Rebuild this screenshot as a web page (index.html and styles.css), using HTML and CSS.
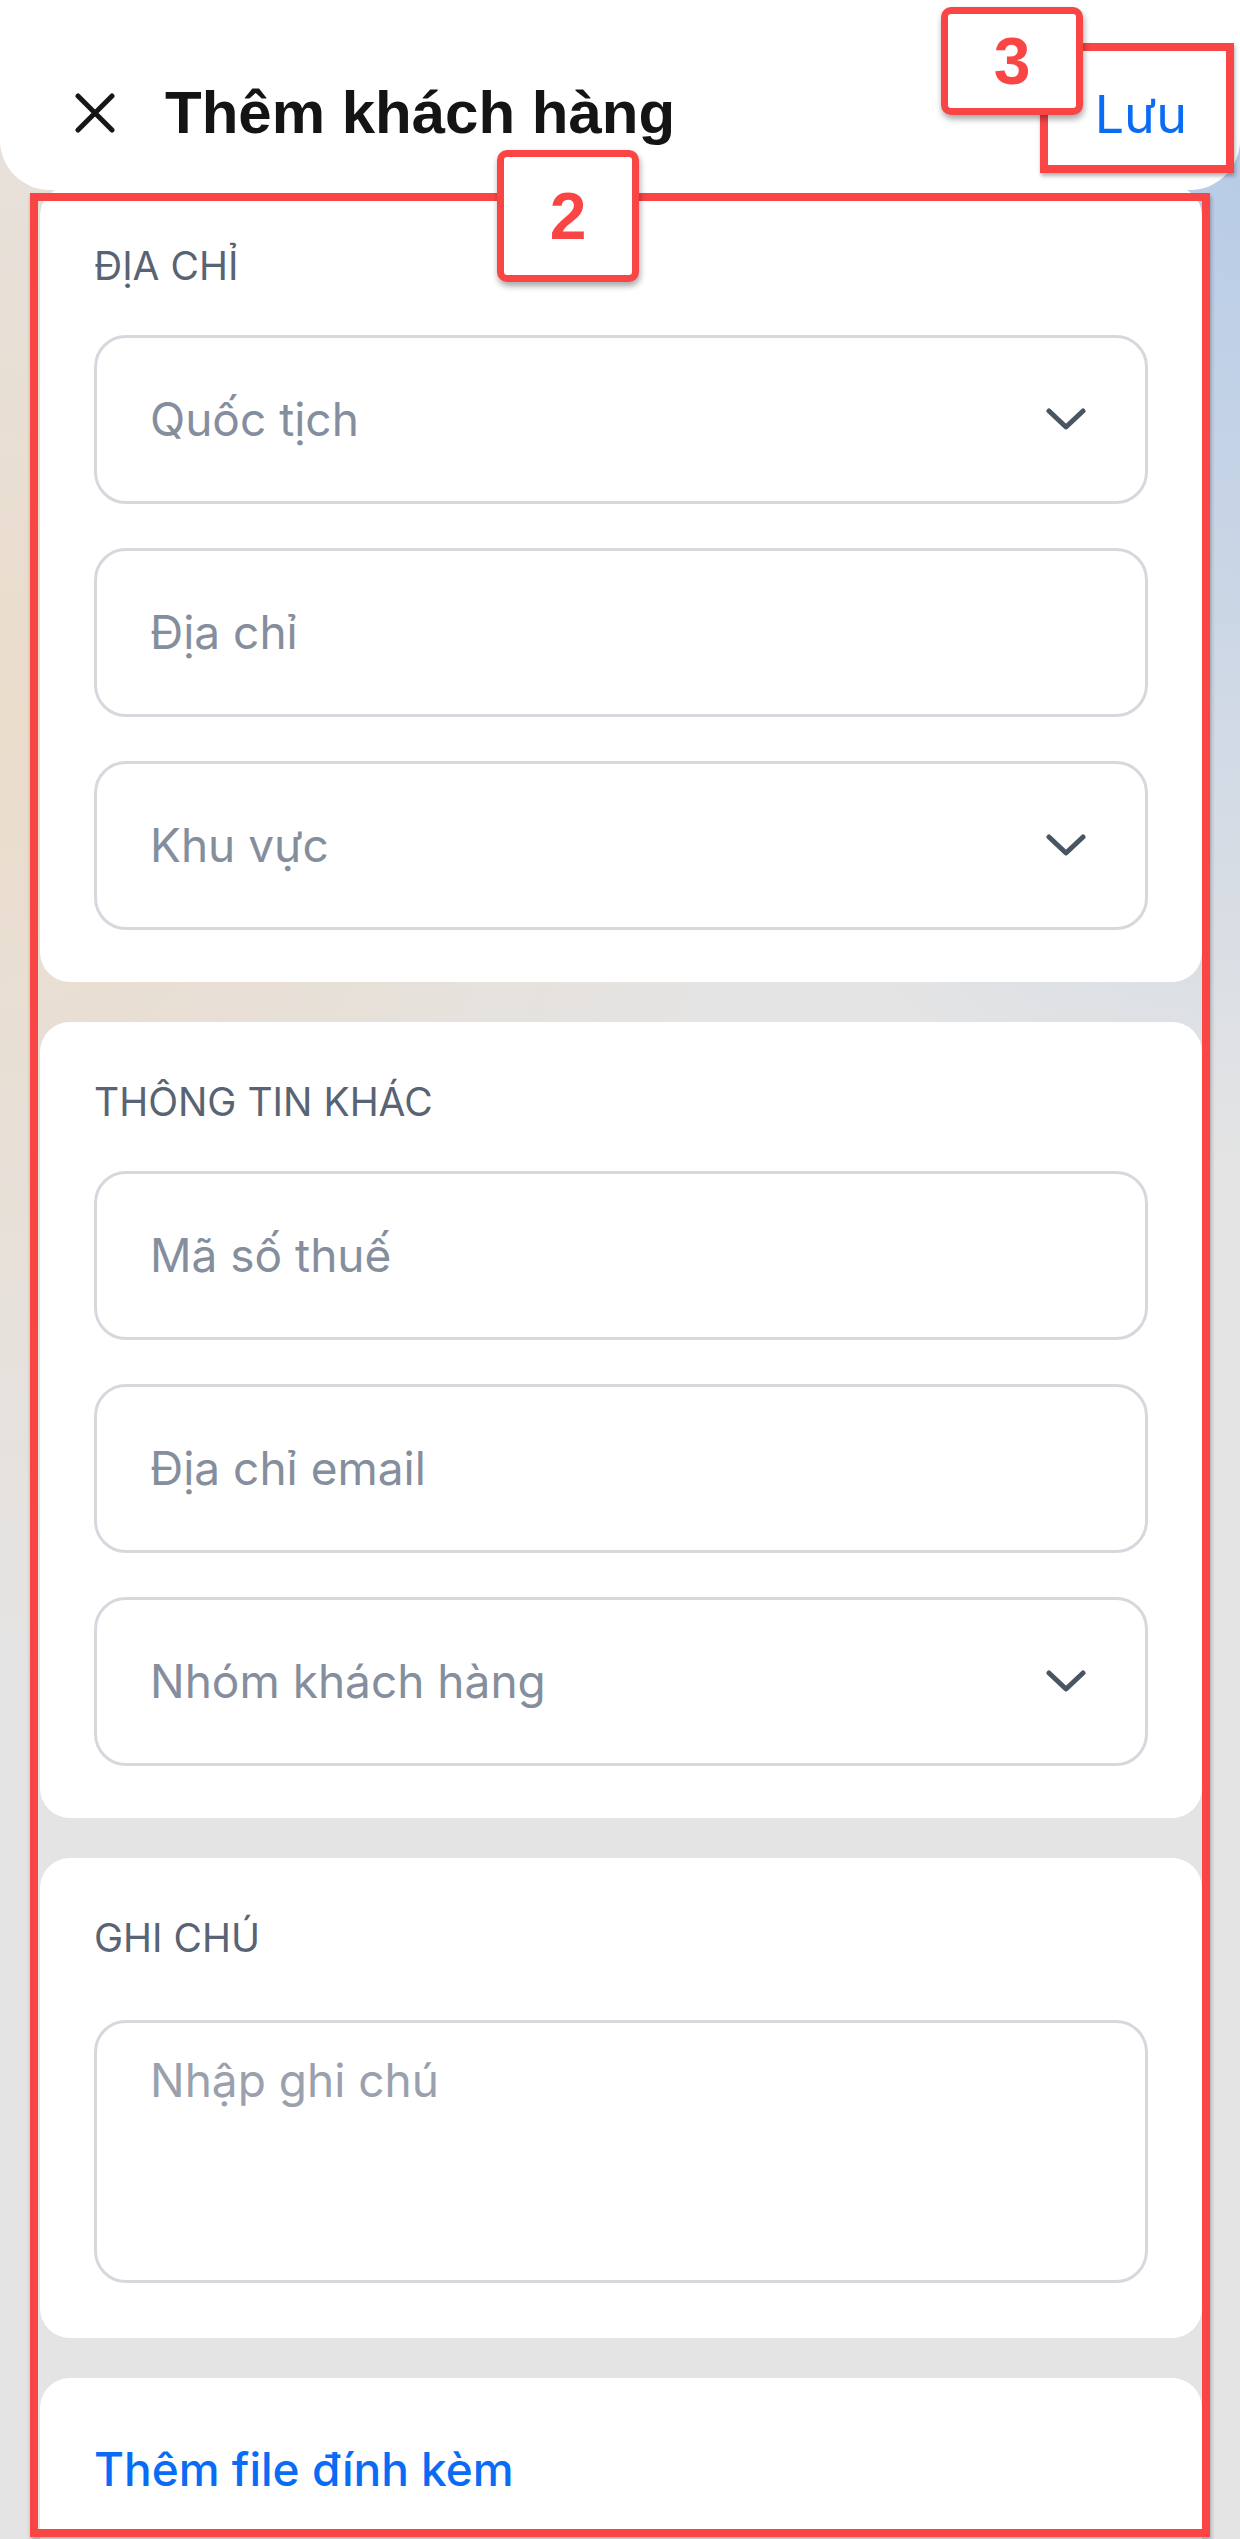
FILE: index.html
```html
<!DOCTYPE html>
<html lang="vi">
<head>
<meta charset="utf-8">
<title>Thêm khách hàng</title>
<link rel="stylesheet" href="styles.css">
</head>
<body>
  <header class="header">
    <svg class="close" width="40" height="40" viewBox="0 0 40 40" aria-hidden="true">
      <path d="M3 3 L37 37 M37 3 L3 37" stroke="#161616" stroke-width="5" stroke-linecap="round" fill="none"/>
    </svg>
    <h1 class="title">Thêm khách hàng</h1>
    <span class="save">Lưu</span>
  </header>

  <main class="content">
    <section class="card">
      <div class="label">ĐỊA CHỈ</div>
      <div class="fields">
        <div class="field"><span class="ph">Quốc tịch</span>
          <svg class="chev" width="40" height="24" viewBox="0 0 40 24"><path d="M3 3 L20 19 L37 3" stroke="#4a5563" stroke-width="5" stroke-linecap="round" stroke-linejoin="round" fill="none"/></svg>
        </div>
        <div class="field"><span class="ph">Địa chỉ</span></div>
        <div class="field"><span class="ph">Khu vực</span>
          <svg class="chev" width="40" height="24" viewBox="0 0 40 24"><path d="M3 3 L20 19 L37 3" stroke="#4a5563" stroke-width="5" stroke-linecap="round" stroke-linejoin="round" fill="none"/></svg>
        </div>
      </div>
    </section>

    <section class="card">
      <div class="label">THÔNG TIN KHÁC</div>
      <div class="fields">
        <div class="field"><span class="ph">Mã số thuế</span></div>
        <div class="field"><span class="ph">Địa chỉ email</span></div>
        <div class="field"><span class="ph">Nhóm khách hàng</span>
          <svg class="chev" width="40" height="24" viewBox="0 0 40 24"><path d="M3 3 L20 19 L37 3" stroke="#4a5563" stroke-width="5" stroke-linecap="round" stroke-linejoin="round" fill="none"/></svg>
        </div>
      </div>
    </section>

    <section class="card card-note">
      <div class="label">GHI CHÚ</div>
      <div class="textarea"><span class="ph ph-light">Nhập ghi chú</span></div>
    </section>

    <section class="card card-attach">
      <span class="attach">Thêm file đính kèm</span>
    </section>
  </main>

  <div class="anno-rect anno-main"></div>
  <div class="anno-rect anno-save"></div>
  <div class="anno-box anno-2">2</div>
  <div class="anno-box anno-3">3</div>
</body>
</html>
```

FILE: styles.css
```css
html, body {
  margin: 0;
  padding: 0;
}

body {
  position: relative;
  width: 1240px;
  height: 2539px;
  overflow: hidden;
  font-family: Inter, "Noto Sans", "Liberation Sans", sans-serif;
  background:
    radial-gradient(ellipse 760px 950px at 0px 720px, #eadccb 0%, rgba(234, 220, 203, 0) 100%),
    radial-gradient(ellipse 640px 1050px at 1240px 120px, #b6cbe7 0%, rgba(182, 203, 231, 0) 100%),
    #e4e4e4;
}

/* Header */
.header {
  position: relative;
  z-index: 2;
  box-sizing: border-box;
  height: 190px;
  padding: 73px 53px 37px 75px;
  display: flex;
  align-items: center;
  background: #ffffff;
  border-radius: 0 0 50px 50px;
}

.close {
  flex: none;
  display: block;
}

.title {
  margin: 0 0 0 50px;
  font-family: "Liberation Sans", Arial, sans-serif;
  font-weight: 700;
  font-size: 60px;
  line-height: 80px;
  color: #141414;
}

.save {
  margin-left: auto;
  padding-top: 4px;
  font-size: 52px;
  line-height: 80px;
  color: #0a6cf5;
}

/* Content */
.content {
  margin-top: -4px;
  padding: 0 38px 0 40px;
  display: flex;
  flex-direction: column;
  gap: 40px;
}

.card {
  background: #ffffff;
  border-radius: 30px;
  padding: 58px 54px 52px;
}

.label {
  font-size: 39px;
  line-height: 44px;
  font-weight: 400;
  color: #586374;
  margin-bottom: 47px;
}

.fields {
  display: flex;
  flex-direction: column;
  gap: 44px;
}

.field {
  box-sizing: border-box;
  height: 169px;
  border: 3px solid #d6d8de;
  border-radius: 32px;
  display: flex;
  align-items: center;
  justify-content: space-between;
  padding: 0 59px 0 53px;
}

.ph {
  font-size: 46px;
  line-height: 55px;
  color: #858e9d;
}

.ph-light {
  color: #9aa1ad;
}

.chev {
  flex: none;
  display: block;
}

.card-note {
  padding-bottom: 55px;
}

.card-note .label {
  margin-bottom: 60px;
}

.textarea {
  box-sizing: border-box;
  height: 263px;
  border: 3px solid #d6d8de;
  border-radius: 32px;
  padding: 30px 53px 0;
}

.card-attach {
  padding: 63px 54px 80px;
}

.attach {
  font-size: 46px;
  line-height: 56px;
  font-weight: 500;
  color: #0a6cf5;
}

/* Annotation overlays */
.anno-rect {
  position: absolute;
  z-index: 3;
  box-sizing: border-box;
  border: 8px solid #fa4545;
  box-shadow: 1px 3px 4px rgba(0, 0, 0, 0.3);
}

.anno-main {
  left: 30px;
  top: 193px;
  width: 1180px;
  height: 2344px;
}

.anno-save {
  left: 1040px;
  top: 43px;
  width: 194px;
  height: 130px;
}

.anno-box {
  position: absolute;
  z-index: 4;
  box-sizing: border-box;
  display: flex;
  align-items: center;
  justify-content: center;
  background: #ffffff;
  border: 7px solid #fa4545;
  border-radius: 10px;
  box-shadow: 1px 4px 6px rgba(0, 0, 0, 0.35);
  font-family: "Liberation Sans", Arial, sans-serif;
  font-weight: 700;
  font-size: 66px;
  line-height: 1;
  color: #fa4545;
}

.anno-2 {
  left: 497px;
  top: 150px;
  width: 142px;
  height: 132px;
}

.anno-3 {
  left: 941px;
  top: 7px;
  width: 142px;
  height: 108px;
}
```
